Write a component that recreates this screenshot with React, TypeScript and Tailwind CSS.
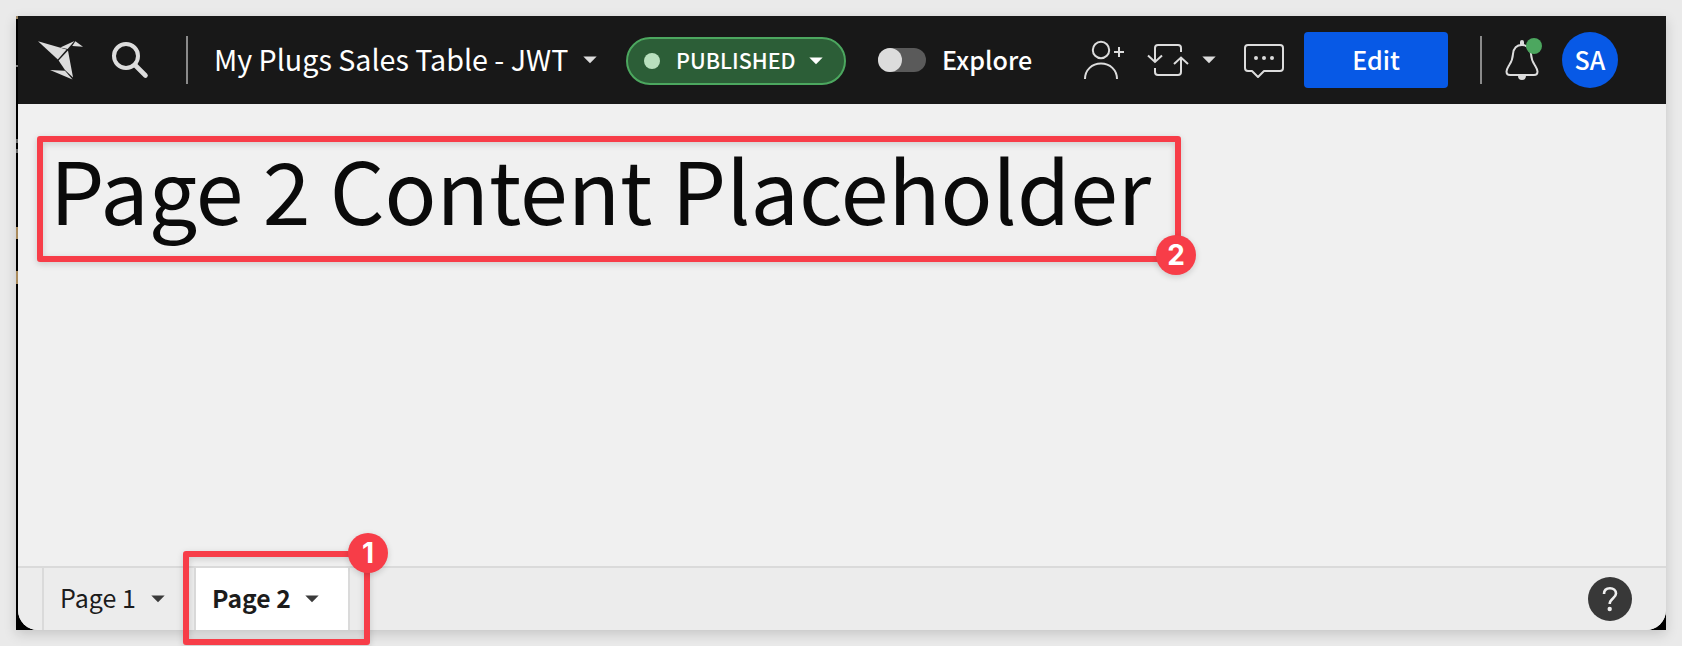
import React from "react";

const SANS = "font-['Noto_Sans_CJK_JP','Noto_Sans_CJK_SC',sans-serif]";

function Caret({ className }: { className: string }) {
  return (
    <svg className={`shrink-0 ${className}`} width="14" height="8" viewBox="0 0 14 8" fill="currentColor">
      <path d="M0.3 0.5h13.4L7 7.3z" />
    </svg>
  );
}

function Bird() {
  return (
    <svg className="ml-5 shrink-0" width="46" height="40" viewBox="38 40 46 40" fill="#dcdcdc">
      <path d="M38 41.2L66.600 49.600L57.800 59.400z" />
      <path d="M60.300 47.600L74.500 41L67.600 49z" />
      <path d="M75.400 41.200L83 46.800L72.200 46z" />
      <path d="M68 50.600L58.600 60.600L65 70L73 77.500z" />
      <path d="M50 70L65 70.800L72.500 79.400z" />
    </svg>
  );
}

function SearchIcon() {
  return (
    <svg className="ml-[27px] shrink-0" width="38" height="38" viewBox="111 41 38 38" fill="none" stroke="#dcdcdc">
      <circle cx="126" cy="56" r="12" strokeWidth="4" />
      <path d="M135 65L145.5 75.5" strokeWidth="4.6" strokeLinecap="round" />
    </svg>
  );
}

function AddUserIcon() {
  return (
    <svg className="ml-[51px] shrink-0" width="42" height="40" viewBox="1083 41 42 40" fill="none" stroke="#dcdcdc" strokeWidth="2">
      <circle cx="1101" cy="51" r="8.2" />
      <path d="M1085 80c0-9 7-15.500 16-15.500s16 6.500 16 15.500" />
      <path d="M1114 53h10M1119 48v10" />
    </svg>
  );
}

function RefreshIcon() {
  return (
    <svg className="ml-[22px] shrink-0" width="42" height="36" viewBox="1147 42 42 36" fill="none" stroke="#dcdcdc" strokeWidth="2">
      <path d="M1155 61.500V48q0-3 3-3h20q3 0 3 3v4" />
      <path d="M1148 55.500l7 6.500 7-6.500" />
      <path d="M1181 58.500V72q0 3-3 3h-20q-3 0-3-3v-4" />
      <path d="M1174 64l7-6.500 7 6.500" />
    </svg>
  );
}

function CommentIcon() {
  return (
    <svg className="ml-[27px] shrink-0" width="42" height="36" viewBox="1243 42 42 36" fill="none" stroke="#dcdcdc" strokeWidth="2">
      <path d="M1248 45h32q3 0 3 3v20q0 3-3 3h-16l-6 6-6-6h-4q-3 0-3-3V48q0-3 3-3z" strokeLinejoin="round" />
      <g fill="#dcdcdc" stroke="none">
        <circle cx="1256" cy="58" r="2" />
        <circle cx="1264" cy="58" r="2" />
        <circle cx="1272" cy="58" r="2" />
      </g>
    </svg>
  );
}

function BellIcon() {
  return (
    <svg className="ml-[23px] shrink-0" width="40" height="44" viewBox="1505 38 40 44">
      <g fill="none" stroke="#dcdcdc" strokeWidth="2">
        <path d="M1522 45c-6 0-8.500 4-9 9c-.3 5-1.500 8-4 11.500c-1.500 2.500-2.500 4-2.500 6q0 3.500 3.500 3.500h24q3.500 0 3.500-3.500c0-2-1-3.500-2.500-6c-2.500-3.500-3.700-6.500-4-11.500c-.5-5-3-9-9-9z" />
      </g>
      <path d="M1520 45v-3q0-2 2-2t2 2v3zM1518 76h8q0 4-4 4t-4-4z" fill="#dcdcdc" />
      <circle cx="1534" cy="46" r="8" fill="#4ca75f" />
    </svg>
  );
}

function Badge({ label, className }: { label: string; className: string }) {
  return (
    <div
      className={`absolute flex size-10 items-center justify-center rounded-full bg-[#f73d48] font-['Inter',sans-serif] text-[28px] leading-none font-bold text-white shadow-[0_2px_6px_rgba(0,0,0,0.16)] ${className}`}
    >
      {label}
    </div>
  );
}

function Header() {
  return (
    <header className="flex h-[88px] shrink-0 items-center bg-[#181818] text-white">
      <Bird />
      <SearchIcon />
      <div className="ml-[37px] h-12 w-0.5 shrink-0 bg-[#8a8a8a]" />
      <div className="mb-0.5 ml-[26px] w-[356px] shrink-0 text-[28.650px] leading-10 whitespace-nowrap">
        My Plugs Sales Table - JWT
      </div>
      <Caret className="ml-[13px] text-[#dcdcdc]" />
      <div className="mt-0.5 ml-[29px] flex h-12 w-[220px] shrink-0 items-center rounded-full border-2 border-[#4ca75f] bg-[#2c5e37]">
        <span className="ml-4 size-4 shrink-0 rounded-full bg-[#b9e0be]" />
        <span className="mb-0.5 ml-4 w-[120px] shrink-0 text-[21.500px] leading-8 font-medium whitespace-nowrap">PUBLISHED</span>
        <Caret className="ml-[13px]" />
      </div>
      <div className="ml-8 h-6 w-12 shrink-0 rounded-full bg-[#5a5a5a]">
        <div className="size-6 rounded-full bg-[#dcdcdc]" />
      </div>
      <div className="mb-0.5 ml-4 w-[90px] shrink-0 text-[25.100px] leading-9 font-medium">Explore</div>
      <AddUserIcon />
      <RefreshIcon />
      <Caret className="ml-[13px] text-[#dcdcdc]" />
      <CommentIcon />
      <button className="ml-[19px] h-14 w-36 shrink-0 rounded bg-[#0759e6] pb-0.5 text-[25px] leading-9 font-medium">Edit</button>
      <div className="ml-8 h-12 w-0.5 shrink-0 bg-[#8a8a8a]" />
      <BellIcon />
      <div className="ml-[17px] flex size-14 shrink-0 items-center justify-center rounded-full bg-[#0759e6] pb-0.5 text-[25px] leading-9 font-medium">
        SA
      </div>
    </header>
  );
}

function Footer() {
  return (
    <footer className="flex h-16 shrink-0 items-stretch border-t-2 border-[#dadada] bg-[#ececec] text-[25px] text-[#1c1c1c]">
      <div className="ml-6 flex w-[152px] shrink-0 items-center border-l-2 border-[#dadada]">
        <span className="mb-0.5 ml-4 w-[76px] whitespace-nowrap">Page 1</span>
        <Caret className="ml-[15px] text-[#3a3a3a]" />
      </div>
      <div className="flex w-[156px] shrink-0 items-center border-x-2 border-[#dadada] bg-white">
        <span className="mb-0.5 ml-4 w-[78px] text-[24.700px] font-bold whitespace-nowrap">Page 2</span>
        <Caret className="ml-[15px] text-[#3a3a3a]" />
      </div>
      <div className="mt-[9px] mr-[34px] ml-auto flex size-11 items-center justify-center rounded-full bg-[#383838] text-white">
        <svg width="20" height="28" viewBox="0 0 20 28" fill="none" stroke="#f0f0f0" strokeWidth="2.600">
          <path d="M4 9C4 5 6.500 3.200 10 3.200s6 2 6 5.300c0 4.700-6.300 4.700-6.300 10.500" />
          <circle cx="9.700" cy="24" r="2.200" fill="#f0f0f0" stroke="none" />
        </svg>
      </div>
    </footer>
  );
}

function EdgeStrip() {
  return (
    <div className="flex w-0.5 shrink-0 flex-col">
      <div className="h-[3px] bg-[#9d8663]" />
      <div className="mt-[46px] h-0.5 bg-[#777777]" />
      <div className="mt-[72px] h-1 bg-[#666666]" />
      <div className="mt-1.5 h-1 bg-[#666666]" />
      <div className="mt-[74px] h-3 bg-[#a98b5d]" />
      <div className="mt-8 h-[13px] bg-[#a98b5d]" />
    </div>
  );
}

export default function App() {
  return (
    <div className={`relative h-[646px] w-[1682px] overflow-hidden bg-[#eaeaea] p-4 ${SANS}`}>
      <div className="flex h-[614px] w-[1650px] bg-black shadow-[0_4px_12px_rgba(0,0,0,0.16)]">
        <EdgeStrip />
        <div className="flex h-full flex-1 flex-col overflow-hidden rounded-b-[20px] bg-[#f0f0f0]">
          <Header />
          <main className="flex-1 pt-5 pl-[32px]">
            <h1 className="text-[85.950px] leading-[128px] whitespace-nowrap text-[#0a0a0a]">Page 2 Content Placeholder</h1>
          </main>
          <Footer />
        </div>
      </div>
      <div className="absolute top-[136px] left-[37px] h-[126px] w-[1144px] rounded-[3px] border-6 border-[#f73d48] drop-shadow-[0_2px_3px_rgba(0,0,0,0.16)]" />
      <Badge label="2" className="top-[235px] left-[1156px]" />
      <div className="absolute top-[551px] left-[183px] h-[94px] w-[187px] rounded-[3px] border-6 border-[#f73d48] drop-shadow-[0_2px_3px_rgba(0,0,0,0.16)]" />
      <Badge label="1" className="top-[533px] left-[348px]" />
    </div>
  );
}
